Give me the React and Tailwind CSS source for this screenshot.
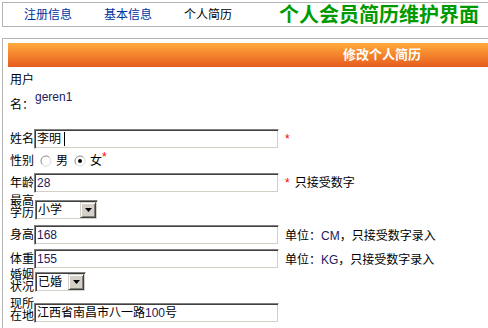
const L = "text-[#202060]";

function Field({ children, w = "w-[245px]" }) {
  return (
    <div
      className={`${w} h-[20px] shrink-0 bg-white border border-t-[#808080] border-l-[#808080] border-b-white border-r-white shadow-[inset_1px_1px_0_#404040,inset_-1px_-1px_0_#d4d0c8] flex items-center pl-[2px] leading-[14px] whitespace-nowrap`}
    >
      {children}
    </div>
  );
}

function Select({ w, value }) {
  return (
    <div
      className={`${w} h-[20px] shrink-0 bg-white border border-t-[#808080] border-l-[#808080] border-b-white border-r-white shadow-[inset_1px_1px_0_#404040,inset_-1px_-1px_0_#d4d0c8] flex items-center p-[1px]`}
    >
      <span className="flex-1 pl-[1px] leading-[14px] whitespace-nowrap">{value}</span>
      <div className="w-[16px] h-[16px] bg-[#d4d0c8] border border-t-[#d4d0c8] border-l-[#d4d0c8] border-b-[#404040] border-r-[#404040] shadow-[inset_1px_1px_0_#ffffff,inset_-1px_-1px_0_#808080] flex items-center justify-center">
        <svg width="7" height="4" viewBox="0 0 7 4">
          <path d="M0 0H7L3.5 4Z" fill="#000" />
        </svg>
      </div>
    </div>
  );
}

function Radio({ checked }) {
  return (
    <svg width="12" height="12" viewBox="0 0 12 12" className="shrink-0">
      <circle cx="6" cy="6" r="5" fill="#fff" />
      <path d="M2.46 9.54A5 5 0 0 1 9.54 2.46" stroke="#8a8a8a" strokeWidth="1" fill="none" />
      <path d="M9.54 2.46A5 5 0 0 1 2.46 9.54" stroke="#dcdcdc" strokeWidth="1" fill="none" />
      {checked && <circle cx="6" cy="6" r="2" fill="#000" />}
    </svg>
  );
}

function Star({ className = "" }) {
  return <span className={`text-[#ff0000] leading-[14px] ${className}`}>*</span>;
}

function Label2({ text, className = "" }) {
  return (
    <div className={`w-[24px] shrink-0 leading-[12px] break-all ${className}`}>{text}</div>
  );
}

export default function App() {
  return (
    <div className="w-[488px] h-[328px] overflow-hidden bg-white text-[12px] text-black font-['Liberation_Sans','Noto_Sans_CJK_SC',sans-serif]">
      <div className="pt-[2px] pl-[2px]">
        <div className="w-[900px] h-[25px] border-t border-b border-l border-[#b4b4b4] flex items-center whitespace-nowrap">
          <span className="ml-[21px] text-[#0033a0] leading-[14px]">注册信息</span>
          <span className="ml-[32px] text-[#0033a0] leading-[14px]">基本信息</span>
          <span className="ml-[32px] leading-[14px]">个人简历</span>
          <span className="ml-[47px] text-[20px] font-bold text-[#009a00] leading-[22px]">
            个人会员简历维护界面
          </span>
        </div>

        <div className="mt-[11px] w-[900px] h-[300px] border-t border-l border-[#b4b4b4] pt-[4px]">
          <div className="ml-[5px] h-[24px] bg-linear-to-b from-[#ffaa3c] to-[#e65a1e] flex items-center pl-[335px] text-white font-bold text-[13px] leading-[16px] whitespace-nowrap">
            修改个人简历
          </div>

          <div className="pl-[7px] flex flex-col">
            {/* 用户名 */}
            <div className="mt-[7px] h-[38px] flex items-start">
              <div className="w-[24px] shrink-0 flex flex-col leading-[12px]">
                <span>用户</span>
                <span className="mt-[13px] whitespace-nowrap">名：</span>
              </div>
              <div className={`pt-[16px] ml-[1px] leading-[14px] ${L}`}>geren1</div>
            </div>

            {/* 姓名 */}
            <div className="mt-[15px] h-[24px] flex items-center">
              <span className="w-[24px] shrink-0 leading-[14px]">姓名</span>
              <Field>
                <span>李明</span>
                <span className="ml-[3px] w-[1px] h-[14px] bg-black" />
              </Field>
              <Star className="ml-[6px]" />
            </div>

            {/* 性别 */}
            <div className="h-[20px] flex items-center">
              <span className="w-[24px] shrink-0 leading-[14px]">性别</span>
              <span className="ml-[6px]"><Radio /></span>
              <span className="ml-[4px] leading-[14px]">男</span>
              <span className="ml-[6px]"><Radio checked /></span>
              <span className="ml-[4px] leading-[14px]">女</span>
              <Star className="self-start -mt-[1px]" />
            </div>

            {/* 年龄 */}
            <div className="h-[24px] flex items-center">
              <span className="w-[24px] shrink-0 leading-[14px]">年龄</span>
              <Field>
                <span className={L}>28</span>
              </Field>
              <Star className="ml-[6px]" />
              <span className="ml-[5px] leading-[14px] whitespace-nowrap">只接受数字</span>
            </div>

            {/* 最高学历 */}
            <div className="h-[28px] flex items-start">
              <Label2 text="最高学历" />
              <div className="mt-[5px] ml-[1px]">
                <Select w="w-[63px]" value="小学" />
              </div>
            </div>

            {/* 身高 */}
            <div className="h-[24px] flex items-center">
              <span className="w-[24px] shrink-0 leading-[14px]">身高</span>
              <Field>
                <span className={L}>168</span>
              </Field>
              <span className="ml-[6px] leading-[14px] whitespace-nowrap mt-[2px]">
                单位：<span className={L}>CM</span>，只接受数字录入
              </span>
            </div>

            {/* 体重 */}
            <div className="h-[24px] flex items-center">
              <span className="w-[24px] shrink-0 leading-[14px]">体重</span>
              <Field>
                <span className={L}>155</span>
              </Field>
              <span className="ml-[6px] leading-[14px] whitespace-nowrap mt-[2px]">
                单位：<span className={L}>KG</span>，只接受数字录入
              </span>
            </div>

            {/* 婚姻状况 */}
            <div className="h-[22px] flex items-start">
              <Label2 text="婚姻状况" className="-mt-[2px]" />
              <div className="mt-[1px] ml-[1px]">
                <Select w="w-[51px]" value="已婚" />
              </div>
            </div>

            {/* 现所在地 */}
            <div className="h-[34px] flex items-start">
              <Label2 text="现所在地" className="pt-[5px]" />
              <div className="mt-[10px]">
                <Field>
                  <span>
                    江西省南昌市八一路<span className={L}>100</span>号
                  </span>
                </Field>
              </div>
            </div>
          </div>
        </div>
      </div>
    </div>
  );
}
